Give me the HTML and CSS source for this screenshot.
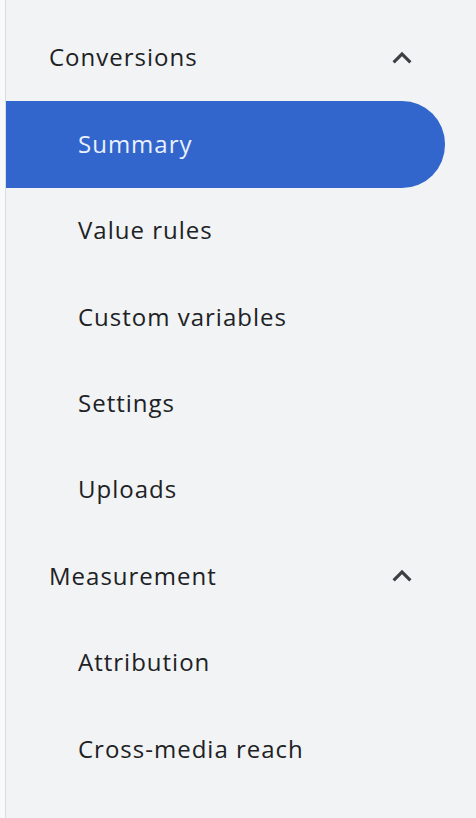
FILE: index.html
```html
<!DOCTYPE html>
<html>
<head>
<meta charset="utf-8">
<link rel="stylesheet" href="styles.css">
</head>
<body>
<div class="frame">
  <div class="rail"></div>
  <nav class="nav">
    <div class="group">
      <span class="group-title">Conversions</span>
      <svg class="chev" viewBox="0 0 24 24"><path d="M12 8l-6 6 1.41 1.41L12 10.83l4.59 4.58L18 14z"/></svg>
    </div>
    <div class="item active">Summary</div>
    <div class="item">Value rules</div>
    <div class="item">Custom variables</div>
    <div class="item">Settings</div>
    <div class="item">Uploads</div>
    <div class="group">
      <span class="group-title">Measurement</span>
      <svg class="chev" viewBox="0 0 24 24"><path d="M12 8l-6 6 1.41 1.41L12 10.83l4.59 4.58L18 14z"/></svg>
    </div>
    <div class="item">Attribution</div>
    <div class="item">Cross-media reach</div>
  </nav>
</div>
</body>
</html>
```
FILE: styles.css
```css
html, body {
  margin: 0;
  padding: 0;
  height: 100%;
}
body {
  background: #f1f3f4;
  font-family: "Open Sans", "Noto Sans", sans-serif;
  color: #202124;
}
.frame {
  display: flex;
  min-height: 818px;
}
.rail {
  width: 5px;
  flex: none;
  background: #f8f9fa;
  border-right: 1px solid #dadce0;
}
.nav {
  flex: 1;
  padding-top: 14.8px;
  display: flex;
  flex-direction: column;
}
.group {
  height: 86.4px;
  display: flex;
  align-items: center;
  padding-left: 43px;
  padding-right: 55px;
  box-sizing: border-box;
}
.group-title {
  flex: 1;
  font-size: 24px;
  font-weight: 500;
  letter-spacing: 1px;
  padding-bottom: 2px;
}
.chev {
  width: 38px;
  height: 38px;
  fill: #3c4043;
}
.item {
  height: 86.4px;
  display: flex;
  align-items: center;
  padding-left: 72px;
  padding-bottom: 2px;
  font-size: 24px;
  font-weight: 500;
  letter-spacing: 1px;
  width: 439px;
  box-sizing: border-box;
  border-radius: 0 43px 43px 0;
}
.item.active {
  background: #3266cc;
  color: #eaf1fe;
}
```
